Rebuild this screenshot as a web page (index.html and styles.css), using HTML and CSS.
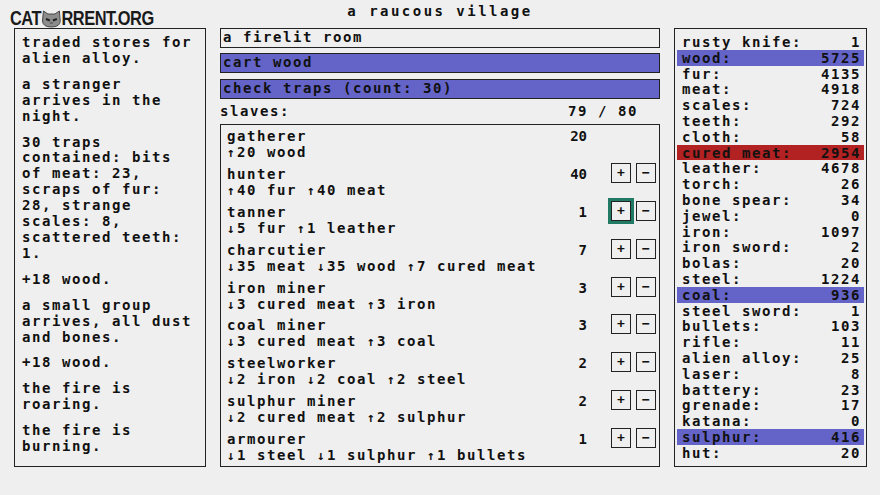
FILE: index.html
```html
<!DOCTYPE html>
<html lang="en">
<head>
    <meta charset="UTF-8">
    <title>a raucous village</title>
    <link rel="stylesheet" href="styles.css">
</head>
<body>
    <div class="logo">
        <span>CAT</span>
        <svg class="logo-cat" width="23" height="18" viewBox="0 0 19 18" preserveAspectRatio="none">
            <path d="M1.5 1 L6 4 H13 L17.5 1 L18.5 11 Q18 17 9.5 17 Q1 17 .5 11 Z" fill="#8c8c8c" stroke="#444" stroke-width="1"/>
            <path d="M4 9 L8 10.5 M11 10.5 L15 9" stroke="#222" stroke-width="2"/>
            <path d="M8 13 H11" stroke="#444" stroke-width="1"/>
        </svg>
        <span>RRENT.ORG</span>
    </div>
    <h1 class="title">a raucous village</h1>

    <div class="columns">
        <div class="panel log">
            <p>traded stores for alien alloy.</p>
            <p>a stranger arrives in the night.</p>
            <p>30 traps contained: bits of meat: 23, scraps of fur: 28, strange scales: 8, scattered teeth: 1.</p>
            <p>+18 wood.</p>
            <p>a small group arrives, all dust and bones.</p>
            <p>+18 wood.</p>
            <p>the fire is roaring.</p>
            <p>the fire is burning.</p>
        </div>

        <div class="middle">
            <div class="bar">a firelit room</div>
            <div class="bar action">cart wood</div>
            <div class="bar action">check traps (count: 30)</div>
            <div class="slaves"><span>slaves:</span><span class="slaves-count">79 / 80</span></div>
            <div class="panel workers">
                <div class="worker">
                    <div class="worker-info"><div>gatherer</div><div><span class="arrow">↑</span>20 wood</div></div>
                    <div class="worker-count">20</div>
                    <div class="worker-btns"></div>
                </div>
                <div class="worker">
                    <div class="worker-info"><div>hunter</div><div><span class="arrow">↑</span>40 fur <span class="arrow">↑</span>40 meat</div></div>
                    <div class="worker-count">40</div>
                    <div class="worker-btns"><button class="btn">+</button><button class="btn">−</button></div>
                </div>
                <div class="worker">
                    <div class="worker-info"><div>tanner</div><div><span class="arrow">↓</span>5 fur <span class="arrow">↑</span>1 leather</div></div>
                    <div class="worker-count">1</div>
                    <div class="worker-btns"><button class="btn btn-focus">+</button><button class="btn">−</button></div>
                </div>
                <div class="worker">
                    <div class="worker-info"><div>charcutier</div><div><span class="arrow">↓</span>35 meat <span class="arrow">↓</span>35 wood <span class="arrow">↑</span>7 cured meat</div></div>
                    <div class="worker-count">7</div>
                    <div class="worker-btns"><button class="btn">+</button><button class="btn">−</button></div>
                </div>
                <div class="worker">
                    <div class="worker-info"><div>iron miner</div><div><span class="arrow">↓</span>3 cured meat <span class="arrow">↑</span>3 iron</div></div>
                    <div class="worker-count">3</div>
                    <div class="worker-btns"><button class="btn">+</button><button class="btn">−</button></div>
                </div>
                <div class="worker">
                    <div class="worker-info"><div>coal miner</div><div><span class="arrow">↓</span>3 cured meat <span class="arrow">↑</span>3 coal</div></div>
                    <div class="worker-count">3</div>
                    <div class="worker-btns"><button class="btn">+</button><button class="btn">−</button></div>
                </div>
                <div class="worker">
                    <div class="worker-info"><div>steelworker</div><div><span class="arrow">↓</span>2 iron <span class="arrow">↓</span>2 coal <span class="arrow">↑</span>2 steel</div></div>
                    <div class="worker-count">2</div>
                    <div class="worker-btns"><button class="btn">+</button><button class="btn">−</button></div>
                </div>
                <div class="worker">
                    <div class="worker-info"><div>sulphur miner</div><div><span class="arrow">↓</span>2 cured meat <span class="arrow">↑</span>2 sulphur</div></div>
                    <div class="worker-count">2</div>
                    <div class="worker-btns"><button class="btn">+</button><button class="btn">−</button></div>
                </div>
                <div class="worker">
                    <div class="worker-info"><div>armourer</div><div><span class="arrow">↓</span>1 steel <span class="arrow">↓</span>1 sulphur <span class="arrow">↑</span>1 bullets</div></div>
                    <div class="worker-count">1</div>
                    <div class="worker-btns"><button class="btn">+</button><button class="btn">−</button></div>
                </div>
            </div>
        </div>

        <div class="panel stores">
            <div class="store"><span>rusty knife:</span><span>1</span></div>
            <div class="store blue"><span>wood:</span><span>5725</span></div>
            <div class="store"><span>fur:</span><span>4135</span></div>
            <div class="store"><span>meat:</span><span>4918</span></div>
            <div class="store"><span>scales:</span><span>724</span></div>
            <div class="store"><span>teeth:</span><span>292</span></div>
            <div class="store"><span>cloth:</span><span>58</span></div>
            <div class="store red"><span>cured meat:</span><span>2954</span></div>
            <div class="store"><span>leather:</span><span>4678</span></div>
            <div class="store"><span>torch:</span><span>26</span></div>
            <div class="store"><span>bone spear:</span><span>34</span></div>
            <div class="store"><span>jewel:</span><span>0</span></div>
            <div class="store"><span>iron:</span><span>1097</span></div>
            <div class="store"><span>iron sword:</span><span>2</span></div>
            <div class="store"><span>bolas:</span><span>20</span></div>
            <div class="store"><span>steel:</span><span>1224</span></div>
            <div class="store blue"><span>coal:</span><span>936</span></div>
            <div class="store"><span>steel sword:</span><span>1</span></div>
            <div class="store"><span>bullets:</span><span>103</span></div>
            <div class="store"><span>rifle:</span><span>11</span></div>
            <div class="store"><span>alien alloy:</span><span>25</span></div>
            <div class="store"><span>laser:</span><span>8</span></div>
            <div class="store"><span>battery:</span><span>23</span></div>
            <div class="store"><span>grenade:</span><span>17</span></div>
            <div class="store"><span>katana:</span><span>0</span></div>
            <div class="store blue"><span>sulphur:</span><span>416</span></div>
            <div class="store"><span>hut:</span><span>20</span></div>
        </div>
    </div>
</body>
</html>
```

FILE: styles.css
```css
body {
    margin: 0;
    height: 495px;
    overflow: hidden;
    background-color: #efefef;
    color: #111;
    font-family: "DejaVu Sans Mono", monospace;
    font-size: 14px;
    font-weight: bold;
    letter-spacing: 1.57px;
    line-height: 16px;
}

.logo {
    position: absolute;
    top: 8px;
    left: 10px;
    display: flex;
    align-items: center;
    font-family: "Liberation Sans", sans-serif;
    font-size: 20px;
    letter-spacing: -0.6px;
    line-height: 21px;
    color: #1a1a1a;
    transform: scaleX(0.82);
    transform-origin: left center;
}

.logo-cat {
    margin: 0 1px 0 1px;
}

.title {
    margin: 0;
    padding-top: 3px;
    height: 24px;
    box-sizing: border-box;
    font-size: 14px;
    font-weight: bold;
    letter-spacing: 2.47px;
    line-height: 16px;
    text-align: center;
}

.columns {
    display: flex;
    gap: 14px;
    height: 439px;
    margin: 4px 7px 0 14px;
}

.panel {
    border: 1px solid #222;
    box-sizing: border-box;
}

.log {
    width: 192px;
    padding: 6px 7px;
    line-height: 15.9px;
}

.log p {
    margin: 0 0 10px;
}

.middle {
    display: flex;
    flex-direction: column;
    width: 440px;
}

.bar {
    flex-shrink: 0;
    height: 20px;
    box-sizing: border-box;
    margin-bottom: 5.3px;
    padding: 0 2px;
    border: 1px solid #222;
    line-height: 17px;
}

.action {
    background-color: #6464c8;
}

.slaves {
    flex-shrink: 0;
    display: flex;
    height: 21px;
    margin-top: -0.9px;
    box-sizing: border-box;
}

.slaves-count {
    margin-left: auto;
    margin-right: 22px;
}

.workers {
    flex: 1;
    min-height: 0;
    padding: 3px 3px 0 6px;
}

.worker {
    display: flex;
    height: 37.9px;
}

.worker-info {
    flex: 1;
}

.arrow {
    display: inline-block;
    width: 10px;
    font-size: 13px;
    letter-spacing: 0;
}

.worker-count {
    width: 30px;
    text-align: right;
    letter-spacing: 0;
}

.worker-btns {
    display: flex;
    gap: 5px;
    width: 45px;
    height: 20px;
    margin-top: -3px;
    margin-left: 24px;
}

.btn {
    width: 20px;
    height: 20px;
    padding: 0;
    border: 1px solid #222;
    background: none;
    color: #111;
    font-family: "DejaVu Sans Mono", monospace;
    font-size: 13px;
    font-weight: bold;
    line-height: 16px;
}

.btn-focus {
    outline: 3px solid #217a63;
    outline-offset: 0;
}

.stores {
    width: 193px;
    padding: 5px 2px 0 2px;
}

.store {
    display: flex;
    justify-content: space-between;
    height: 15.8px;
    line-height: 16px;
    padding: 0 3px 0 5px;
}

.blue {
    background-color: #6464c8;
}

.red {
    background-color: #b22222;
}
```
